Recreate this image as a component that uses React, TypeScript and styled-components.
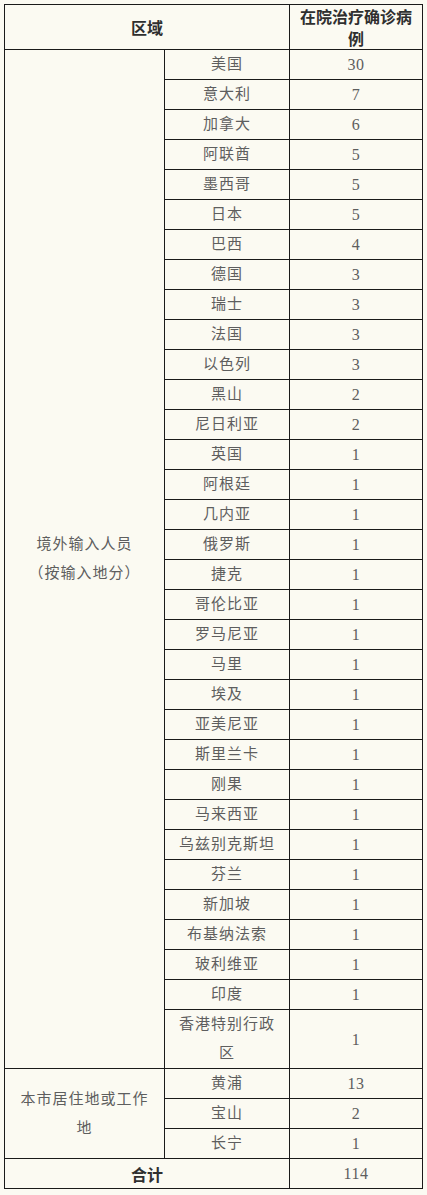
import styled, { createGlobalStyle } from "styled-components";

const GlobalStyle = createGlobalStyle`
  html, body {
    margin: 0;
    padding: 0;
    background: #fbfaf2;
  }
  body {
    font-family: "Liberation Serif", "Noto Sans CJK SC", serif;
  }
`;

const Page = styled.div`
  padding: 4px 5px 4px 4px;
`;

const Table = styled.table`
  width: 418px;
  border-collapse: collapse;
  table-layout: fixed;
  border: 1px solid #1a1a1a;
`;

const HeadCell = styled.th`
  border: 1px solid #1a1a1a;
  padding: 0 8px;
  line-height: 22px;
  font-size: 16px;
  font-weight: bold;
  color: #2f2f2f;
  text-align: center;
  vertical-align: middle;
  font-family: "Noto Sans CJK SC", sans-serif;
`;

const Cell = styled.td<{ $wide?: boolean }>`
  border: 1px solid #1a1a1a;
  padding: 0 ${(p) => (p.$wide ? "10px" : "8px")};
  line-height: 29px;
  font-size: 15px;
  color: #5e5e5e;
  text-align: center;
  vertical-align: middle;
  letter-spacing: 1px;
`;

const NumCell = styled(Cell)`
  font-size: 16px;
  letter-spacing: 0.5px;
`;

const TotalCell = styled(HeadCell)`
  line-height: 28px;
`;

const abroad: [string, number][] = [
  ["美国", 30],
  ["意大利", 7],
  ["加拿大", 6],
  ["阿联酋", 5],
  ["墨西哥", 5],
  ["日本", 5],
  ["巴西", 4],
  ["德国", 3],
  ["瑞士", 3],
  ["法国", 3],
  ["以色列", 3],
  ["黑山", 2],
  ["尼日利亚", 2],
  ["英国", 1],
  ["阿根廷", 1],
  ["几内亚", 1],
  ["俄罗斯", 1],
  ["捷克", 1],
  ["哥伦比亚", 1],
  ["罗马尼亚", 1],
  ["马里", 1],
  ["埃及", 1],
  ["亚美尼亚", 1],
  ["斯里兰卡", 1],
  ["刚果", 1],
  ["马来西亚", 1],
  ["乌兹别克斯坦", 1],
  ["芬兰", 1],
  ["新加坡", 1],
  ["布基纳法索", 1],
  ["玻利维亚", 1],
  ["印度", 1],
  ["香港特别行政区", 1],
];

const local: [string, number][] = [
  ["黄浦", 13],
  ["宝山", 2],
  ["长宁", 1],
];

export default function App() {
  return (
    <Page>
      <GlobalStyle />
      <Table>
        <colgroup>
          <col style={{ width: 160 }} />
          <col style={{ width: 125 }} />
          <col style={{ width: 133 }} />
        </colgroup>
        <thead>
          <tr>
            <HeadCell colSpan={2}>区域</HeadCell>
            <HeadCell>在院治疗确诊病例</HeadCell>
          </tr>
        </thead>
        <tbody>
          {abroad.map(([name, n], i) => (
            <tr key={name}>
              {i === 0 && (
                <Cell $wide rowSpan={abroad.length}>
                  境外输入人员
                  <br />
                  （按输入地分）
                </Cell>
              )}
              <Cell>{name}</Cell>
              <NumCell>{n}</NumCell>
            </tr>
          ))}
          {local.map(([name, n], i) => (
            <tr key={name}>
              {i === 0 && (
                <Cell $wide rowSpan={local.length}>
                  本市居住地或工作地
                </Cell>
              )}
              <Cell>{name}</Cell>
              <NumCell>{n}</NumCell>
            </tr>
          ))}
          <tr>
            <TotalCell colSpan={2}>合计</TotalCell>
            <NumCell>114</NumCell>
          </tr>
        </tbody>
      </Table>
    </Page>
  );
}
